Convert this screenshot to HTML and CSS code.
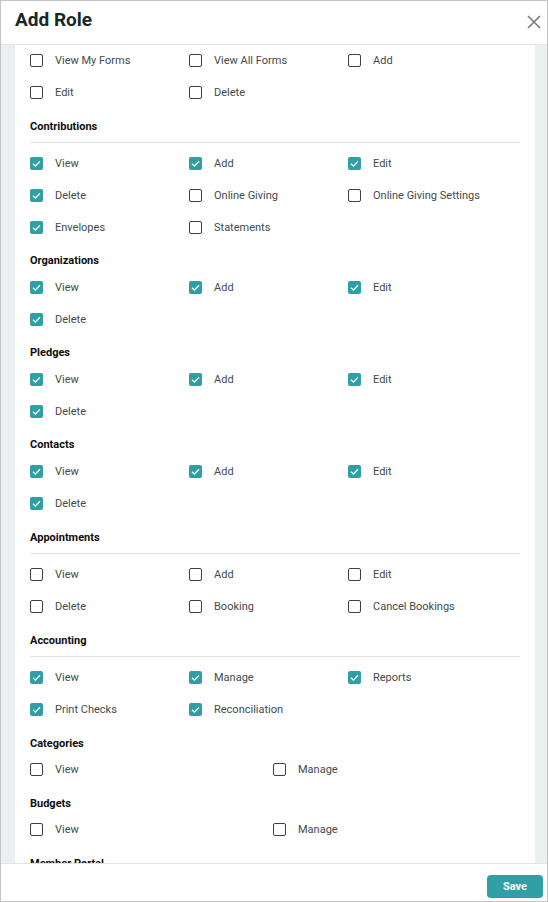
FILE: index.html
```html
<!DOCTYPE html>
<html lang="en">
<head>
    <meta charset="UTF-8">
    <meta name="viewport" content="width=device-width, initial-scale=1.0">
    <title>Add Role</title>
    <link rel="stylesheet" href="styles.css">
</head>
<body>
    <div class="modal">
        <div class="modal-header">
            <h1>Add Role</h1>
            <button class="close" aria-label="Close">
                <svg width="14" height="14" viewBox="0 0 14 14"><path d="M1 1L13 13M13 1L1 13" stroke="#7a7a7a" stroke-width="1.6" fill="none"/></svg>
            </button>
        </div>

        <div class="modal-body">
            <div class="panel">
                <!-- Forms (scrolled past heading) -->
                <div class="section first">
                    <div class="perms cols-3">
                        <label class="perm"><span class="box"></span>View My Forms</label>
                        <label class="perm"><span class="box"></span>View All Forms</label>
                        <label class="perm"><span class="box"></span>Add</label>
                        <label class="perm"><span class="box"></span>Edit</label>
                        <label class="perm"><span class="box"></span>Delete</label>
                    </div>
                </div>

                <div class="section ruled">
                    <h2>Contributions</h2>
                    <hr>
                    <div class="perms cols-3">
                        <label class="perm"><span class="box on"><svg viewBox="0 0 13 13"><path d="M3 6.8L5.4 9.1L10 4.2"/></svg></span>View</label>
                        <label class="perm"><span class="box on"><svg viewBox="0 0 13 13"><path d="M3 6.8L5.4 9.1L10 4.2"/></svg></span>Add</label>
                        <label class="perm"><span class="box on"><svg viewBox="0 0 13 13"><path d="M3 6.8L5.4 9.1L10 4.2"/></svg></span>Edit</label>
                        <label class="perm"><span class="box on"><svg viewBox="0 0 13 13"><path d="M3 6.8L5.4 9.1L10 4.2"/></svg></span>Delete</label>
                        <label class="perm"><span class="box"></span>Online Giving</label>
                        <label class="perm"><span class="box"></span>Online Giving Settings</label>
                        <label class="perm"><span class="box on"><svg viewBox="0 0 13 13"><path d="M3 6.8L5.4 9.1L10 4.2"/></svg></span>Envelopes</label>
                        <label class="perm"><span class="box"></span>Statements</label>
                    </div>
                </div>

                <div class="section">
                    <h2>Organizations</h2>
                    <div class="perms cols-3">
                        <label class="perm"><span class="box on"><svg viewBox="0 0 13 13"><path d="M3 6.8L5.4 9.1L10 4.2"/></svg></span>View</label>
                        <label class="perm"><span class="box on"><svg viewBox="0 0 13 13"><path d="M3 6.8L5.4 9.1L10 4.2"/></svg></span>Add</label>
                        <label class="perm"><span class="box on"><svg viewBox="0 0 13 13"><path d="M3 6.8L5.4 9.1L10 4.2"/></svg></span>Edit</label>
                        <label class="perm"><span class="box on"><svg viewBox="0 0 13 13"><path d="M3 6.8L5.4 9.1L10 4.2"/></svg></span>Delete</label>
                    </div>
                </div>

                <div class="section">
                    <h2>Pledges</h2>
                    <div class="perms cols-3">
                        <label class="perm"><span class="box on"><svg viewBox="0 0 13 13"><path d="M3 6.8L5.4 9.1L10 4.2"/></svg></span>View</label>
                        <label class="perm"><span class="box on"><svg viewBox="0 0 13 13"><path d="M3 6.8L5.4 9.1L10 4.2"/></svg></span>Add</label>
                        <label class="perm"><span class="box on"><svg viewBox="0 0 13 13"><path d="M3 6.8L5.4 9.1L10 4.2"/></svg></span>Edit</label>
                        <label class="perm"><span class="box on"><svg viewBox="0 0 13 13"><path d="M3 6.8L5.4 9.1L10 4.2"/></svg></span>Delete</label>
                    </div>
                </div>

                <div class="section">
                    <h2>Contacts</h2>
                    <div class="perms cols-3">
                        <label class="perm"><span class="box on"><svg viewBox="0 0 13 13"><path d="M3 6.8L5.4 9.1L10 4.2"/></svg></span>View</label>
                        <label class="perm"><span class="box on"><svg viewBox="0 0 13 13"><path d="M3 6.8L5.4 9.1L10 4.2"/></svg></span>Add</label>
                        <label class="perm"><span class="box on"><svg viewBox="0 0 13 13"><path d="M3 6.8L5.4 9.1L10 4.2"/></svg></span>Edit</label>
                        <label class="perm"><span class="box on"><svg viewBox="0 0 13 13"><path d="M3 6.8L5.4 9.1L10 4.2"/></svg></span>Delete</label>
                    </div>
                </div>

                <div class="section ruled">
                    <h2>Appointments</h2>
                    <hr>
                    <div class="perms cols-3">
                        <label class="perm"><span class="box"></span>View</label>
                        <label class="perm"><span class="box"></span>Add</label>
                        <label class="perm"><span class="box"></span>Edit</label>
                        <label class="perm"><span class="box"></span>Delete</label>
                        <label class="perm"><span class="box"></span>Booking</label>
                        <label class="perm"><span class="box"></span>Cancel Bookings</label>
                    </div>
                </div>

                <div class="section ruled">
                    <h2>Accounting</h2>
                    <hr>
                    <div class="perms cols-3">
                        <label class="perm"><span class="box on"><svg viewBox="0 0 13 13"><path d="M3 6.8L5.4 9.1L10 4.2"/></svg></span>View</label>
                        <label class="perm"><span class="box on"><svg viewBox="0 0 13 13"><path d="M3 6.8L5.4 9.1L10 4.2"/></svg></span>Manage</label>
                        <label class="perm"><span class="box on"><svg viewBox="0 0 13 13"><path d="M3 6.8L5.4 9.1L10 4.2"/></svg></span>Reports</label>
                        <label class="perm"><span class="box on"><svg viewBox="0 0 13 13"><path d="M3 6.8L5.4 9.1L10 4.2"/></svg></span>Print Checks</label>
                        <label class="perm"><span class="box on"><svg viewBox="0 0 13 13"><path d="M3 6.8L5.4 9.1L10 4.2"/></svg></span>Reconciliation</label>
                    </div>
                </div>

                <div class="section wide">
                    <h2>Categories</h2>
                    <div class="perms cols-2">
                        <label class="perm"><span class="box"></span>View</label>
                        <label class="perm"><span class="box"></span>Manage</label>
                    </div>
                </div>

                <div class="section wide">
                    <h2>Budgets</h2>
                    <div class="perms cols-2">
                        <label class="perm"><span class="box"></span>View</label>
                        <label class="perm"><span class="box"></span>Manage</label>
                    </div>
                </div>

                <div class="section wide">
                    <h2>Member Portal</h2>
                </div>
            </div>
        </div>

        <div class="modal-footer">
            <button class="btn">Save</button>
        </div>
    </div>
</body>
</html>
```

FILE: styles.css
```css
body {
    margin: 0;
    font-family: Roboto, "Liberation Sans", Arial, sans-serif;
    background-color: #fff;
}

.modal {
    width: 548px;
    height: 902px;
    box-sizing: border-box;
    border: 1px solid #c4c4c4;
    display: flex;
    flex-direction: column;
    background-color: #fff;
}

.modal-header {
    height: 43px;
    flex-shrink: 0;
    border-bottom: 1px solid #e2e5e6;
    display: flex;
    justify-content: space-between;
    align-items: flex-start;
    padding: 0 6px 0 14px;
}

.modal-header h1 {
    margin: 0;
    padding-top: 7px;
    font-size: 19px;
    font-weight: 700;
    color: #182829;
}

.close {
    border: none;
    background: none;
    padding: 0;
    margin-top: 14px;
    width: 14px;
    height: 14px;
    cursor: pointer;
}

.close svg {
    display: block;
}

.modal-body {
    flex: 1;
    min-height: 0;
    background-color: #eceff0;
    padding: 0 12px 0 14px;
    overflow: hidden;
}

.panel {
    background-color: #fff;
    padding: 0 15px;
    min-height: 100%;
}

.section {
    padding-top: 8px;
}

.section.first {
    padding-top: 0;
    margin-top: -1px;
}

.section.ruled {
    padding-top: 9px;
}

.section.wide {
    padding-top: 10px;
}

h2 {
    margin: 0;
    font-size: 11px;
    line-height: 20px;
    font-weight: 700;
    color: #0e0e0e;
}

hr {
    border: none;
    border-top: 1px solid #e0e2e3;
    margin: 5px 0 4px;
}

.section.wide h2 {
    line-height: 18px;
}

.perms {
    display: grid;
}

.cols-3 {
    grid-template-columns: repeat(3, 159px);
}

.cols-2 {
    grid-template-columns: repeat(2, 243px);
}

.perm {
    height: 32px;
    display: flex;
    align-items: center;
    gap: 12px;
    font-size: 11px;
    color: #3f4b4c;
    cursor: pointer;
}

.box {
    width: 13px;
    height: 13px;
    box-sizing: border-box;
    border: 1.4px solid #3b4142;
    border-radius: 2px;
    flex-shrink: 0;
}

.box.on {
    border: none;
    background-color: #2f9ea5;
}

.box svg {
    display: block;
    width: 13px;
    height: 13px;
}

.box svg path {
    fill: none;
    stroke: #fff;
    stroke-width: 1.3;
}

.modal-footer {
    height: 38px;
    flex-shrink: 0;
    border-top: 1px solid #e2e5e6;
    display: flex;
    justify-content: flex-end;
    align-items: flex-start;
    padding: 11px 4px 0 0;
    box-sizing: border-box;
}

.btn {
    width: 56px;
    height: 23px;
    border: none;
    border-radius: 4px;
    background-color: #2fa0a6;
    color: #fff;
    font-family: Roboto, "Liberation Sans", Arial, sans-serif;
    font-size: 11px;
    font-weight: 700;
    cursor: pointer;
}
```
